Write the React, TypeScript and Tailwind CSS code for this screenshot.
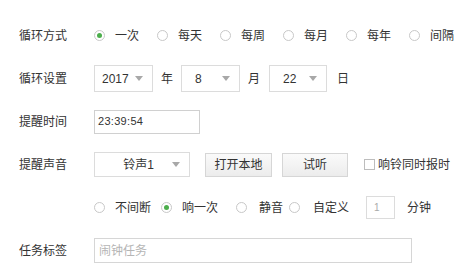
const font = { fontFamily: '"Liberation Sans", "Noto Sans CJK SC", sans-serif' };

const Radio = ({ checked }: { checked?: boolean }) => (
  <span className="flex h-[11px] w-[11px] shrink-0 items-center justify-center rounded-full border border-[#c8c8c8] bg-white">
    {checked && <span className="h-[5px] w-[5px] rounded-full bg-[#4cae4c]" />}
  </span>
);

const Caret = () => (
  <svg width="8" height="5" viewBox="0 0 8 5" className="shrink-0">
    <path d="M0 0h8L4 5z" fill="#a8a8a8" />
  </svg>
);

const Select = ({ value, w, pad }: { value: string; w: string; pad: string }) => (
  <div className={`flex h-[27px] items-center border border-[#dcdcdc] bg-white pr-[9px] ${w}`}>
    <span className={`flex-1 text-[12px] text-[#333] ${pad}`}>{value}</span>
    <Caret />
  </div>
);

const Label = ({ children }: { children: string }) => (
  <div className="w-[75px] shrink-0 text-[12px] text-[#333]">{children}</div>
);

export default function App() {
  const cycles = ['一次', '每天', '每周', '每月', '每年', '间隔'];

  return (
    <div className="h-[269px] w-[463px] overflow-hidden bg-white pl-[19px] pt-[14px] text-[#333]" style={font}>
      <div className="flex h-[43px] items-center">
        <Label>循环方式</Label>
        <div className="flex items-center gap-[18px] whitespace-nowrap">
          {cycles.map((c, i) => (
            <div key={c} className="flex items-center gap-[10px]">
              <Radio checked={i === 0} />
              <span className="text-[12px]">{c}</span>
            </div>
          ))}
        </div>
      </div>

      <div className="flex h-[43px] items-center">
        <Label>循环设置</Label>
        <Select value="2017" w="w-[59px]" pad="pl-[7px]" />
        <span className="ml-[8px] text-[12px]">年</span>
        <div className="ml-[8px]">
          <Select value="8" w="w-[59px]" pad="pl-[13px]" />
        </div>
        <span className="ml-[8px] text-[12px]">月</span>
        <div className="ml-[9px]">
          <Select value="22" w="w-[58px]" pad="pl-[13px]" />
        </div>
        <span className="ml-[10px] text-[12px]">日</span>
      </div>

      <div className="flex h-[43px] items-center">
        <Label>提醒时间</Label>
        <div className="flex h-[24px] w-[106px] items-center border border-[#d0d0d0] pl-[3px] text-[11px] tracking-[0.3px] text-[#333]">
          23:39:54
        </div>
      </div>

      <div className="flex h-[43px] items-center">
        <Label>提醒声音</Label>
        <div className="flex h-[25px] w-[96px] items-center border border-[#dcdcdc] bg-white pr-[9px]">
          <span className="flex-1 pl-[10px] text-center text-[12px]">铃声1</span>
          <Caret />
        </div>
        <button className="ml-[15px] flex h-[24px] w-[67px] items-center justify-center border border-[#d6d6d6] bg-gradient-to-b from-[#fafafa] to-[#ececec] text-[12px] text-[#333]">
          打开本地
        </button>
        <button className="ml-[10px] flex h-[24px] w-[66px] items-center justify-center border border-[#d6d6d6] bg-gradient-to-b from-[#fafafa] to-[#ececec] text-[12px] text-[#333]">
          试听
        </button>
        <span className="ml-[16px] h-[11px] w-[11px] shrink-0 border border-[#bdbdbd] bg-white" />
        <span className="ml-[3px] whitespace-nowrap text-[12px]">响铃同时报时</span>
      </div>

      <div className="flex h-[43px] items-center whitespace-nowrap pl-[75px] text-[12px]">
        <Radio />
        <span className="ml-[10px]">不间断</span>
        <span className="ml-[10px]"><Radio checked /></span>
        <span className="ml-[10px]">响一次</span>
        <span className="ml-[18px]"><Radio /></span>
        <span className="ml-[12px]">静音</span>
        <span className="ml-[6px]"><Radio /></span>
        <span className="ml-[13px]">自定义</span>
        <div className="ml-[17px] flex h-[23px] w-[29px] items-center border border-[#dcdcdc] pl-[7px] text-[10px] text-[#aaa]">1</div>
        <span className="ml-[12px]">分钟</span>
      </div>

      <div className="flex h-[43px] items-center">
        <Label>任务标签</Label>
        <div className="flex h-[25px] w-[318px] items-center border border-[#d6d6d6] pl-[4px] text-[12px] text-[#b5b5b5]">
          闹钟任务
        </div>
      </div>
    </div>
  );
}
